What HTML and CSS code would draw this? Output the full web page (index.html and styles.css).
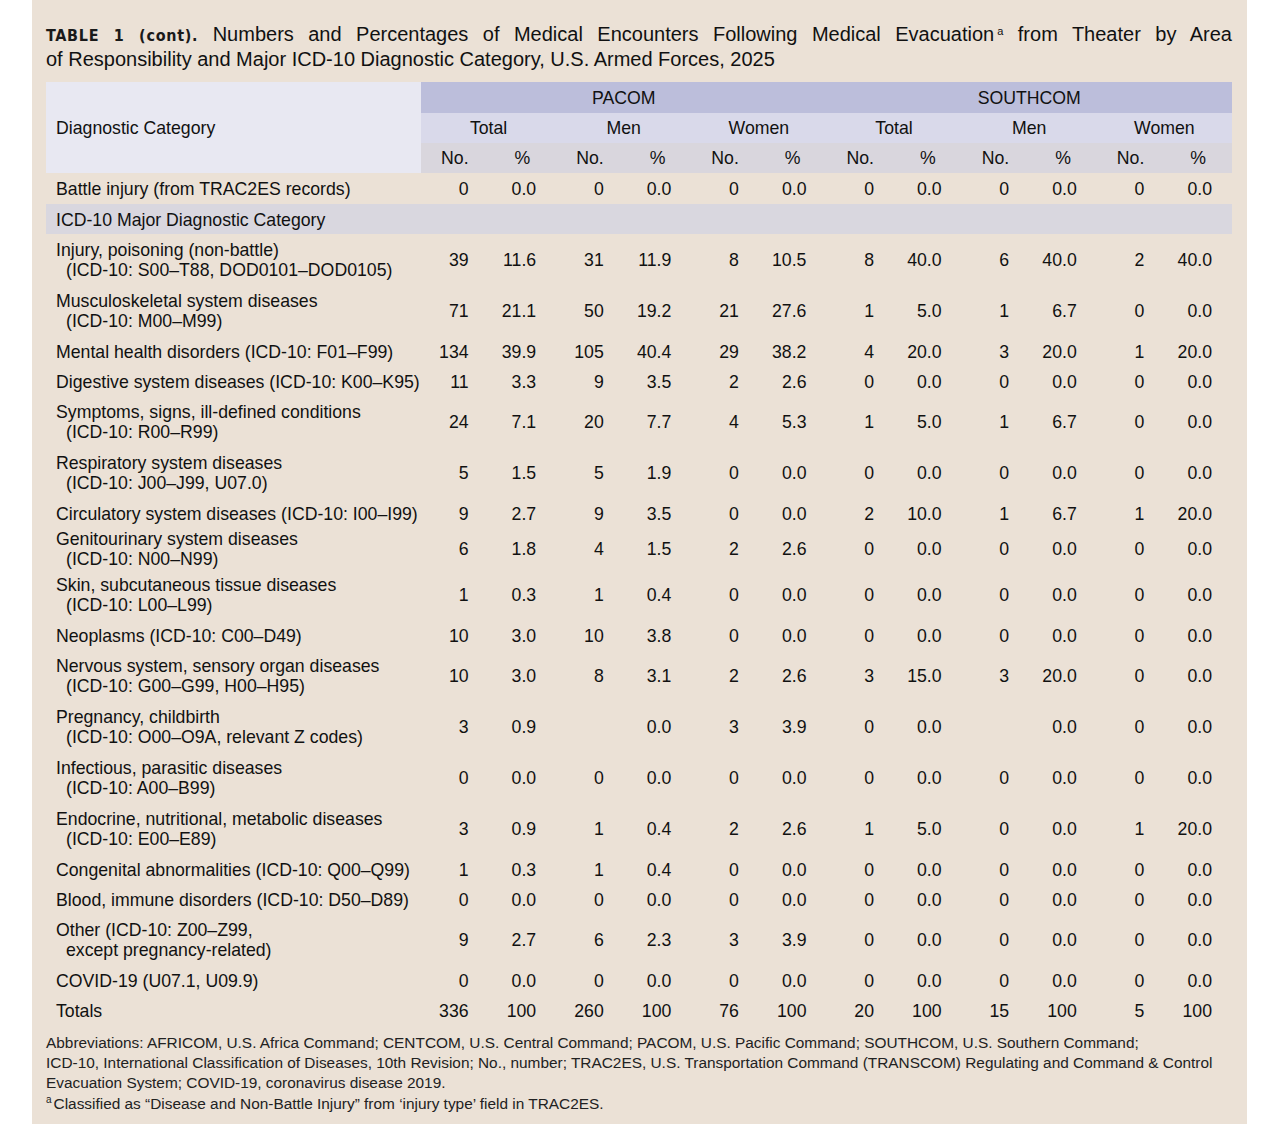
FILE: index.html
```html
<!DOCTYPE html>
<html lang="en">
<head>
    <meta charset="UTF-8">
    <title>Table 1 (cont). Medical Encounters Following Medical Evacuation</title>
    <link rel="stylesheet" href="styles.css">
</head>
<body>
    <div class="panel">
        <div class="title">
            <div class="title-line first"><span class="tag">TABLE 1 (cont).</span> Numbers and Percentages of Medical Encounters Following Medical Evacuation<sup class="mark">a</sup> from Theater by Area</div>
            <div class="title-line">of Responsibility and Major ICD-10 Diagnostic Category, U.S. Armed Forces, 2025</div>
        </div>

        <table id="evacTable">
            <colgroup>
                <col class="col-name">
                <col span="12">
            </colgroup>
            <thead>
                <tr class="head-aor">
                    <th class="cat" rowspan="3">Diagnostic Category</th>
                    <th colspan="6">PACOM</th>
                    <th colspan="6">SOUTHCOM</th>
                </tr>
                <tr class="head-sex">
                    <th colspan="2">Total</th>
                    <th colspan="2">Men</th>
                    <th colspan="2">Women</th>
                    <th colspan="2">Total</th>
                    <th colspan="2">Men</th>
                    <th colspan="2">Women</th>
                </tr>
                <tr class="head-unit">
                    <th>No.</th><th>%</th><th>No.</th><th>%</th><th>No.</th><th>%</th>
                    <th>No.</th><th>%</th><th>No.</th><th>%</th><th>No.</th><th>%</th>
                </tr>
            </thead>
            <tbody>
                <!-- filas generadas desde los datos de abajo -->
            </tbody>
        </table>

        <div class="notes">
            Abbreviations: AFRICOM, U.S. Africa Command; CENTCOM, U.S. Central Command; PACOM, U.S. Pacific Command; SOUTHCOM, U.S. Southern Command;<br>
            ICD-10, International Classification of Diseases, 10th Revision; No., number; TRAC2ES, U.S. Transportation Command (TRANSCOM) Regulating and Command &amp; Control<br>
            Evacuation System; COVID-19, coronavirus disease 2019.<br>
            <span class="foot"><sup class="mark">a</sup>Classified as “Disease and Non-Battle Injury” from ‘injury type’ field in TRAC2ES.</span>
        </div>
    </div>

    <script>
        // name lines, then 12 values (blank "_" = empty cell)
        const rows = [
            [["Battle injury (from TRAC2ES records)"], "0 0.0 0 0.0 0 0.0 0 0.0 0 0.0 0 0.0", "first"],
            "ICD-10 Major Diagnostic Category",
            [["Injury, poisoning (non-battle)", "(ICD-10: S00–T88, DOD0101–DOD0105)"], "39 11.6 31 11.9 8 10.5 8 40.0 6 40.0 2 40.0"],
            [["Musculoskeletal system diseases", "(ICD-10: M00–M99)"], "71 21.1 50 19.2 21 27.6 1 5.0 1 6.7 0 0.0"],
            [["Mental health disorders (ICD-10: F01–F99)"], "134 39.9 105 40.4 29 38.2 4 20.0 3 20.0 1 20.0"],
            [["Digestive system diseases (ICD-10: K00–K95)"], "11 3.3 9 3.5 2 2.6 0 0.0 0 0.0 0 0.0"],
            [["Symptoms, signs, ill-defined conditions", "(ICD-10: R00–R99)"], "24 7.1 20 7.7 4 5.3 1 5.0 1 6.7 0 0.0"],
            [["Respiratory system diseases", "(ICD-10: J00–J99, U07.0)"], "5 1.5 5 1.9 0 0.0 0 0.0 0 0.0 0 0.0"],
            [["Circulatory system diseases (ICD-10: I00–I99)"], "9 2.7 9 3.5 0 0.0 2 10.0 1 6.7 1 20.0"],
            [["Genitourinary system diseases", "(ICD-10: N00–N99)"], "6 1.8 4 1.5 2 2.6 0 0.0 0 0.0 0 0.0", "tight"],
            [["Skin, subcutaneous tissue diseases", "(ICD-10: L00–L99)"], "1 0.3 1 0.4 0 0.0 0 0.0 0 0.0 0 0.0"],
            [["Neoplasms (ICD-10: C00–D49)"], "10 3.0 10 3.8 0 0.0 0 0.0 0 0.0 0 0.0"],
            [["Nervous system, sensory organ diseases", "(ICD-10: G00–G99, H00–H95)"], "10 3.0 8 3.1 2 2.6 3 15.0 3 20.0 0 0.0"],
            [["Pregnancy, childbirth", "(ICD-10: O00–O9A, relevant Z codes)"], "3 0.9 _ 0.0 3 3.9 0 0.0 _ 0.0 0 0.0"],
            [["Infectious, parasitic diseases", "(ICD-10: A00–B99)"], "0 0.0 0 0.0 0 0.0 0 0.0 0 0.0 0 0.0"],
            [["Endocrine, nutritional, metabolic diseases", "(ICD-10: E00–E89)"], "3 0.9 1 0.4 2 2.6 1 5.0 0 0.0 1 20.0"],
            [["Congenital abnormalities (ICD-10: Q00–Q99)"], "1 0.3 1 0.4 0 0.0 0 0.0 0 0.0 0 0.0"],
            [["Blood, immune disorders (ICD-10: D50–D89)"], "0 0.0 0 0.0 0 0.0 0 0.0 0 0.0 0 0.0"],
            [["Other (ICD-10: Z00–Z99,", "except pregnancy-related)"], "9 2.7 6 2.3 3 3.9 0 0.0 0 0.0 0 0.0"],
            [["COVID-19 (U07.1, U09.9)"], "0 0.0 0 0.0 0 0.0 0 0.0 0 0.0 0 0.0"],
            [["Totals"], "336 100 260 100 76 100 20 100 15 100 5 100"]
        ];

        const tbody = document.querySelector("#evacTable tbody");
        rows.forEach((row) => {
            const tr = document.createElement("tr");
            if (typeof row === "string") {
                tr.className = "band";
                tr.innerHTML = `<td class="name" colspan="13">${row}</td>`;
            } else {
                const [lines, values, extra] = row;
                tr.className = (lines.length > 1 ? "two" : "one") + (extra ? " " + extra : "");
                let html = `<td class="name">${lines[0]}`;
                if (lines[1]) html += `<span class="sub">${lines[1]}</span>`;
                html += "</td>";
                values.split(" ").forEach((v) => {
                    html += `<td class="num">${v === "_" ? "" : v}</td>`;
                });
                tr.innerHTML = html;
            }
            tbody.appendChild(tr);
        });
    </script>
</body>
</html>
```

FILE: styles.css
```css
body {
    margin: 0;
    background: #fff;
    font-family: "Liberation Sans", Arial, sans-serif;
    color: #111;
}

.panel {
    margin-left: 32px;
    width: 1215px;
    height: 1124px;
    box-sizing: border-box;
    padding: 22px 15px 0 14px;
    background-color: #ebe1d6;
}

.title {
    font-size: 20px;
    line-height: 25px;
    margin-bottom: 10px;
}

.title-line {
    height: 25px;
}

.title-line.first {
    text-align: justify;
    text-align-last: justify;
}

.tag {
    font-family: "DejaVu Sans Condensed", "Liberation Sans Narrow", sans-serif;
    font-weight: bold;
    font-size: 16px;
    line-height: 1;
    letter-spacing: 0.7px;
    color: #1a1a1a;
}

.mark {
    font-size: 11px;
    line-height: 0;
    vertical-align: 6px;
    margin-left: 3px;
}

table {
    width: 1186px;
    border-collapse: collapse;
    table-layout: fixed;
    font-size: 17.7px;
    line-height: 20px;
}

.col-name {
    width: 375px;
}

th, td {
    padding: 0;
    font-weight: normal;
}

.head-aor th {
    height: 31px;
    background-color: #bcbedb;
}

.head-sex th {
    height: 30px;
    background-color: #d9d9ea;
}

.head-unit th {
    height: 30px;
    background-color: #d9d6dd;
}

th.cat {
    text-align: left;
    padding-left: 10px;
    background-color: #e8e8f2;
}

tbody td {
    padding-top: 1px;
}

td.name {
    padding-left: 10px;
    text-align: left;
}

td.num {
    text-align: right;
    padding-right: 20px;
}

.sub {
    display: block;
    padding-left: 10px;
}

tr.one {
    height: 30px;
}

tr.one.first {
    height: 31px;
}

tr.two {
    height: 51px;
}

tr.two.tight {
    height: 41px;
}

tr.band {
    height: 30px;
}

tr.band td {
    background-color: #d9d7df;
}

.notes {
    margin-top: 8px;
    font-size: 15.4px;
    line-height: 20px;
    color: #222;
}

.notes .mark {
    font-size: 10px;
    margin-left: 0;
    margin-right: 2px;
}

.foot {
    display: inline-block;
    margin-top: 1px;
}
```
